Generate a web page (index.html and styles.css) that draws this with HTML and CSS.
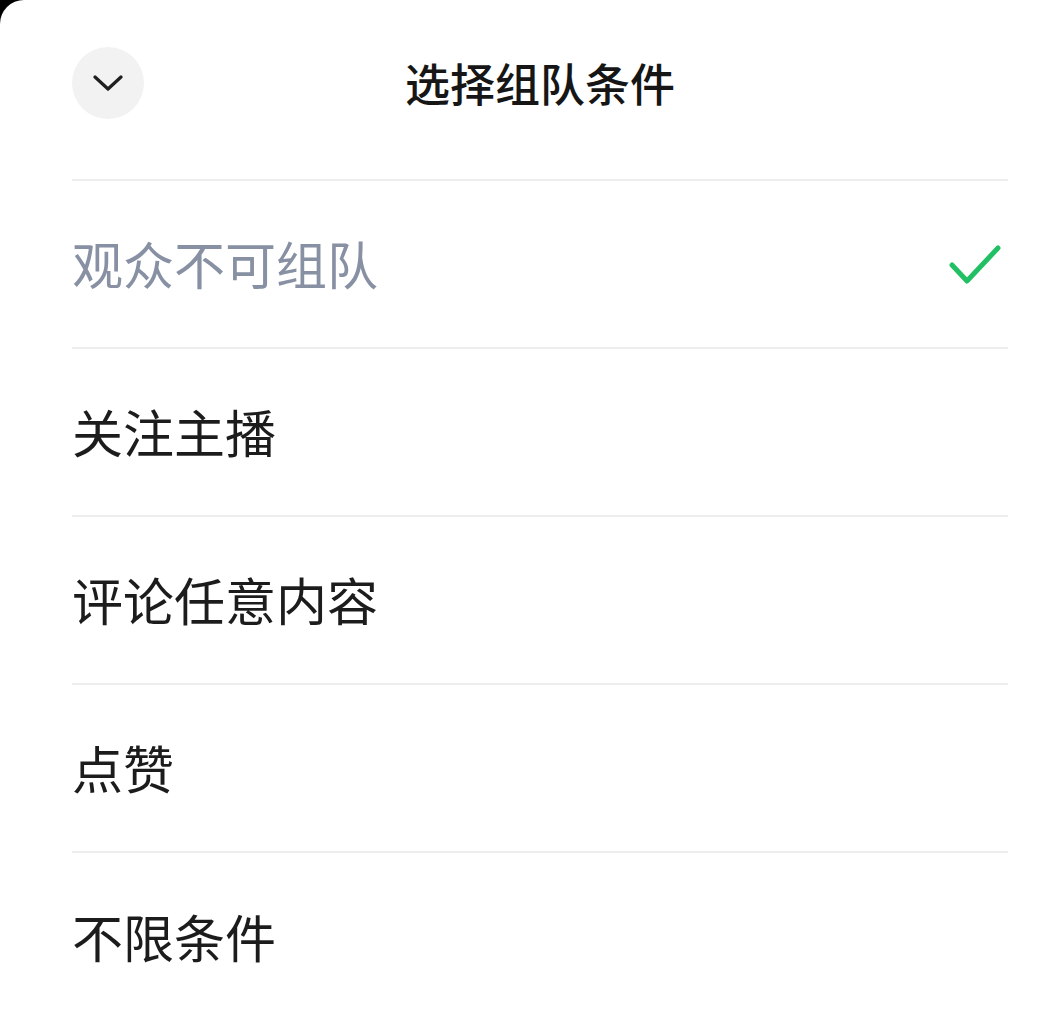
FILE: index.html
```html
<!DOCTYPE html>
<html lang="zh-CN">
<head>
    <meta charset="UTF-8">
    <title>选择组队条件</title>
    <link rel="stylesheet" href="styles.css">
</head>
<body>
  <div class="sheet">
    <div class="head">
      <div class="close">
        <svg width="30" height="18" viewBox="0 0 30 18">
          <path d="M2 3 L15 15 L28 3" fill="none" stroke="#1f1f1f" stroke-width="3.2" stroke-linecap="round" stroke-linejoin="round"/>
        </svg>
      </div>
      <div class="title">选择组队条件</div>
      <div class="spacer"></div>
    </div>
    <ul class="list">
      <li class="on">
        <span>观众不可组队</span>
        <svg class="check" width="60" height="46" viewBox="0 0 60 46">
          <path d="M10 26 L25 42 L56 9" fill="none" stroke="#22c064" stroke-width="5" stroke-linecap="round" stroke-linejoin="round"/>
        </svg>
      </li>
      <li><span>关注主播</span></li>
      <li><span>评论任意内容</span></li>
      <li><span>点赞</span></li>
      <li><span>不限条件</span></li>
    </ul>
  </div>
</body>
</html>
```

FILE: styles.css
```css
* {
  margin: 0px;
  padding: 0px;
  list-style: none;
  box-sizing: border-box;
}
body {
  background-color: #000;
  font-family: "Noto Sans CJK SC", "Noto Sans", sans-serif;
  color: #1c1c1c;
}
.sheet {
  min-height: 1023px;
  background-color: #fff;
  border-top-left-radius: 24px;
  padding-left: 72px;
  padding-right: 29px;
}
.head {
  height: 181px;
  padding-top: 47px;
  display: flex;
  align-items: flex-start;
  border-bottom: 2px solid #ededed;
}
.close {
  width: 72px;
  height: 72px;
  border-radius: 50%;
  background-color: #f2f2f2;
  display: flex;
  align-items: center;
  justify-content: center;
}
.title {
  flex: 1;
  text-align: center;
  font-size: 45px;
  font-weight: 500;
  line-height: 72px;
  color: #161616;
}
.spacer {
  width: 72px;
}
.list li {
  height: 168px;
  display: flex;
  align-items: center;
  justify-content: space-between;
  border-bottom: 2px solid #ededed;
  font-size: 51px;
  line-height: 1;
  padding-bottom: 2px;
}
.list li:last-child {
  border-bottom: none;
}
.list li.on {
  color: #8791a3;
}
.check {
  margin-right: 6px;
  margin-top: -2px;
}
```
